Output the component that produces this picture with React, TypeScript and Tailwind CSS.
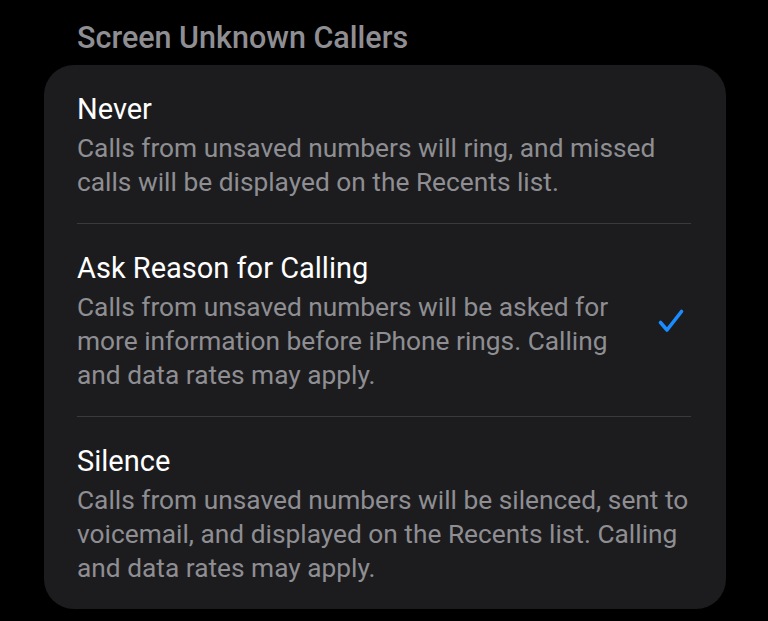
import React from 'react';

type Option = {
  title: string;
  lines: string[];
  checked?: boolean;
};

const options: Option[] = [
  {
    title: 'Never',
    lines: ['Calls from unsaved numbers will ring, and missed', 'calls will be displayed on the Recents list.'],
  },
  {
    title: 'Ask Reason for Calling',
    lines: [
      'Calls from unsaved numbers will be asked for',
      'more information before iPhone rings. Calling',
      'and data rates may apply.',
    ],
    checked: true,
  },
  {
    title: 'Silence',
    lines: [
      'Calls from unsaved numbers will be silenced, sent to',
      'voicemail, and displayed on the Recents list. Calling',
      'and data rates may apply.',
    ],
  },
];

const CheckIcon = () => (
  <svg width="28" height="26" viewBox="0 0 28 26" fill="none">
    <path d="M3.5 14.5 L10 22 L24.5 3.5" stroke="#1a8cff" strokeWidth="3.6" strokeLinecap="round" strokeLinejoin="round" />
  </svg>
);

const App: React.FC = () => {
  return (
    <div
      className="w-[768px] h-[621px] bg-black overflow-hidden"
      style={{ fontFamily: 'Roboto, "Liberation Sans", sans-serif' }}
    >
      <div className="pl-[77px] pt-[20px] h-[65px] text-[30.5px] leading-[36px] text-[#8e8e93] font-medium">
        Screen Unknown Callers
      </div>

      <div className="mx-[44px] w-[682px] rounded-[30px] bg-[#1c1c1e] pl-[33px] pr-[35px]">
        {options.map((opt, i) => (
          <div key={opt.title} className={i > 0 ? 'border-t border-[#3a3a3c]' : ''}>
            <div className="flex items-center pt-[26px] pb-[24px]">
              <div className="flex-1">
                <div className="text-[29px] leading-[36px] text-white">{opt.title}</div>
                <div className="mt-[4px] text-[26.3px] leading-[34px] text-[#8e8e93]">
                  {opt.lines.map((l) => (
                    <div key={l} className="whitespace-nowrap">{l}</div>
                  ))}
                </div>
              </div>
              {opt.checked && (
                <div className="pr-[6px]">
                  <CheckIcon />
                </div>
              )}
            </div>
          </div>
        ))}
      </div>
    </div>
  );
};

export default App;
